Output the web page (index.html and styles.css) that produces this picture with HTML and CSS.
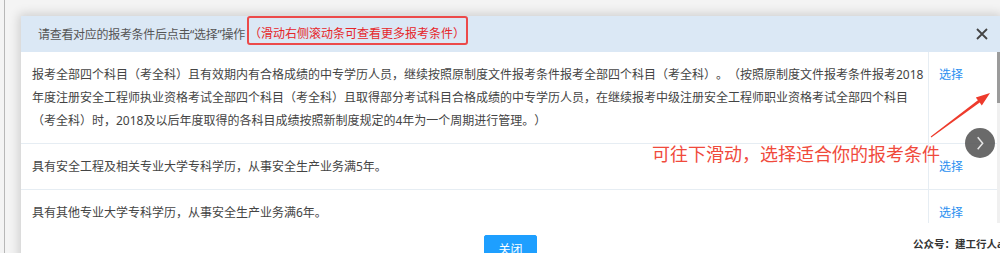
FILE: index.html
```html
<!DOCTYPE html>
<html lang="zh-CN">
<head>
    <meta charset="UTF-8">
    <title>选择报考条件</title>
    <link rel="stylesheet" href="styles.css">
</head>
<body>
<div class="layer">
    <div class="layer-title">
        <span class="tip">请查看对应的报考条件后点击“选择”操作</span><span class="tip-red">（滑动右侧滚动条可查看更多报考条件）</span>
        <a class="layer-close" href="javascript:;">
            <svg width="12" height="12" viewBox="0 0 12 12"><path d="M1 1L11 11M11 1L1 11" stroke="#444" stroke-width="1.8" fill="none"/></svg>
        </a>
    </div>
    <div class="layer-content">
        <ul class="cond-list">
            <li class="cond-row">
                <div class="cond-text">报考全部四个科目（考全科）且有效期内有合格成绩的中专学历人员，继续按照原制度文件报考条件报考全部四个科目（考全科）。（按照原制度文件报考条件报考2018年度注册安全工程师执业资格考试全部四个科目（考全科）且取得部分考试科目合格成绩的中专学历人员，在继续报考中级注册安全工程师职业资格考试全部四个科目（考全科）时，2018及以后年度取得的各科目成绩按照新制度规定的4年为一个周期进行管理。）</div>
                <div class="cond-op"><a href="javascript:;">选择</a></div>
            </li>
            <li class="cond-row">
                <div class="cond-text">具有安全工程及相关专业大学专科学历，从事安全生产业务满5年。</div>
                <div class="cond-op"><a href="javascript:;">选择</a></div>
            </li>
            <li class="cond-row">
                <div class="cond-text">具有其他专业大学专科学历，从事安全生产业务满6年。</div>
                <div class="cond-op"><a href="javascript:;">选择</a></div>
            </li>
        </ul>
        <div class="scrollbar"><div class="thumb"></div></div>
    </div>
    <div class="layer-btns"><a class="btn" href="javascript:;">关闭</a></div>
</div>

<!-- 标注 -->
<svg class="mark-arrow" width="70" height="60" viewBox="0 0 70 60">
    <polygon points="5.7,51.6 52.9,15.2 50.8,12.4 65,8 56.8,20.4 54.7,17.6 6.3,52.4" fill="#ee3b2c"/>
</svg>
<div class="mark-text">可往下滑动，选择适合你的报考条件</div>
<div class="mark-next">
    <svg width="30" height="30" viewBox="0 0 30 30"><path d="M12.7 9.3L17.7 15.3L12.7 21.3" stroke="#e6e6e6" stroke-width="1.5" fill="none"/></svg>
</div>
<div class="watermark">公众号：建工行人a</div>
</body>
</html>
```

FILE: styles.css
```css
* {
    margin: 0;
    padding: 0;
    list-style: none;
    box-sizing: border-box;
}

html, body {
    height: 253px;
    overflow: hidden;
}

body {
    position: relative;
    padding: 16px 0 0 21px;
    font-family: "Noto Sans", "Noto Sans CJK SC", sans-serif;
    font-size: 12px;
    color: #444;
    text-spacing-trim: space-all;
    background: linear-gradient(to right, transparent 4px, #b8b8b8 4px, #b8b8b8 5px, transparent 5px) #f4f4f4;
}

a {
    text-decoration: none;
}

.layer {
    width: 979px;
    height: 260px;
    background: #fff;
    box-shadow: 0 0 10px 2px rgba(0, 0, 0, 0.16);
}

.layer-title {
    height: 36px;
    display: flex;
    align-items: center;
    padding: 0 12px 0 17px;
    background: #dbe8f5;
    color: #555;
}

.tip {
    line-height: 17px;
    letter-spacing: -0.3px;
}

.tip-red {
    align-self: flex-start;
    height: 29px;
    margin-left: 2px;
    padding: 7px 1px 1px 0;
    line-height: 17px;
    color: #e6262a;
    border: 2px solid #ec4a4a;
    border-radius: 3px;
}

.layer-close {
    margin-left: auto;
    display: flex;
}

.layer-content {
    display: flex;
    height: 171px;
    overflow: hidden;
}

.cond-list {
    flex: 1;
}

.cond-row {
    display: flex;
    border-bottom: 1px solid #e6edf3;
}

.cond-text {
    flex: 0 0 908px;
    padding: 11px 2px 11px 11px;
    line-height: 23px;
    border-right: 1px solid #e6edf3;
}

.cond-op {
    flex: 1;
    padding: 11px 0 0 10px;
    line-height: 23px;
}

.cond-op a {
    color: #2b8ff0;
}

.scrollbar {
    width: 3px;
    background: #f0f0f0;
}

.scrollbar .thumb {
    height: 51px;
    background: #9b9b9b;
}

.layer-btns {
    padding-top: 12px;
    text-align: center;
}

.btn {
    display: inline-block;
    height: 28px;
    line-height: 28px;
    padding: 0 13px;
    border: 1px solid #1e9fff;
    background: #1e9fff;
    color: #fff;
    border-radius: 2px;
}

/* 标注 */
.mark-arrow {
    position: absolute;
    left: 925px;
    top: 85px;
}

.mark-text {
    position: absolute;
    left: 652px;
    top: 145px;
    font-size: 18px;
    line-height: 18px;
    color: #f04a3c;
}

.mark-next {
    position: absolute;
    left: 965px;
    top: 128px;
    width: 30px;
    height: 30px;
    border-radius: 50%;
    background: rgba(85, 85, 85, 0.88);
}

.watermark {
    position: absolute;
    left: 913px;
    top: 236px;
    font-size: 10.5px;
    font-weight: bold;
    color: #333;
    white-space: nowrap;
}
```
